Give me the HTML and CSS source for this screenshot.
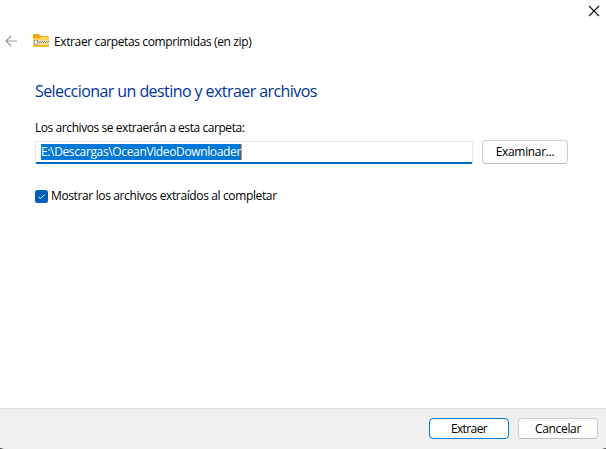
FILE: index.html
```
<!DOCTYPE html>
<html lang="es">
<head>
<meta charset="utf-8">
<title>Extraer carpetas comprimidas (en zip)</title>
<link rel="stylesheet" href="styles.css">
</head>
<body>
<div class="dialog">
  <div class="titlebar">
    <svg class="close" width="12" height="12" viewBox="0 0 12 12"><path d="M1 1l10 10M11 1L1 11"/></svg>
  </div>
  <header class="header">
    <svg class="back" width="12" height="12" viewBox="0 0 12 12"><path d="M12 6H1M6 1L1 6l5 5"/></svg>
    <svg class="zip" width="16" height="14" viewBox="0 0 16 14">
      <path fill="#eeaa14" d="M0 1.2Q0 0 1.2 0H6l2 2h6.8Q16 2 16 3v4H0z"/>
      <path fill="#ffd75e" d="M0 4.5h6L7.5 3H16v9q0 1-1 1H1q-1 0-1-1z"/>
      <path fill="#f3bb35" d="M0 11h16v1q0 1-1 1H1q-1 0-1-1z"/>
      <path fill="#e6e0cc" d="M4 6.5h12v3H4z"/>
      <path stroke="#968c70" stroke-dasharray="1 1" d="M5 7.5h11M6 8.5h10"/>
      <path fill="#a3a8ab" d="M1 6h4v5H1z"/>
      <path fill="#f2f3f4" d="M2 7h2v3H2z"/>
    </svg>
    <span class="title">Extraer carpetas comprimidas (en zip)</span>
  </header>
  <main class="content">
    <h1 class="heading">Seleccionar un destino y extraer archivos</h1>
    <div class="label">Los archivos se extraerán a esta carpeta:</div>
    <div class="row">
      <div class="field"><span class="selection">E:\Descargas\OceanVideoDownloader</span></div>
      <button class="button browse"><span>Examinar...</span></button>
    </div>
    <div class="check">
      <svg class="box" width="13" height="13" viewBox="0 0 13 13"><rect width="13" height="13" rx="2.5"/><path d="M3.5 6.7l2 2 4-4"/></svg>
      <span class="check-label">Mostrar los archivos extraídos al completar</span>
    </div>
  </main>
  <footer class="footer">
    <button class="button primary"><span>Extraer</span></button>
    <button class="button"><span>Cancelar</span></button>
  </footer>
</div>
</body>
</html>
```
FILE: styles.css
```
* { box-sizing: border-box; }
body {
  margin: 0;
  background: #fff;
  color: #000;
  font: 12px/16px "Open Sans", "Noto Sans", sans-serif;
}
.dialog { display: flex; flex-direction: column; height: 449px; overflow: hidden; white-space: nowrap; }
.titlebar { display: flex; justify-content: flex-end; height: 33px; padding: 5px 6px 0 0; }
.close { fill: none; stroke: #111; stroke-width: 1.1; }
.header { display: flex; align-items: center; height: 16px; padding-left: 5px; }
.back { fill: none; stroke: #999; stroke-width: 1.2; }
.zip { margin: 0 5px 0 16px; }
.title { padding-top: 2px; letter-spacing: -0.38px; }
.content { flex: 1; padding: 31px 38px 0 35px; }
.heading { margin: 0; font-size: 16px; font-weight: 400; line-height: 22px; letter-spacing: -0.57px; color: #003399; }
.label { margin-top: 18px; letter-spacing: -0.43px; }
.row { display: flex; align-items: center; gap: 9px; margin-top: 4px; }
.field {
  width: 438px;
  height: 23px;
  padding: 2px 5px;
  border: 1px solid #e5e9ed;
  border-bottom: 2px solid #0067c0;
  border-radius: 2px;
  line-height: 15px;
}
.selection { display: inline-block; height: 16px; background: #0078d7; color: #fff; letter-spacing: -0.36px; border-right: 1px solid #ff8728; }
.check { display: flex; align-items: center; gap: 3px; margin-top: 24px; }
.box rect { fill: #005fb8; }
.box path { fill: none; stroke: #fff; }
.check-label { letter-spacing: -0.37px; }
.button {
  width: 80px;
  height: 21px;
  padding: 0;
  border: 1px solid #d0d0d0;
  border-bottom-color: #bcbcbc;
  border-radius: 4px;
  background: #fdfdfd;
  color: #000;
  font: inherit;
  line-height: 18px;
  letter-spacing: -0.33px;
}
.browse { width: 86px; height: 24px; }
.primary { border-color: #0078d4; letter-spacing: -0.6px; }
.footer {
  display: flex;
  justify-content: flex-end;
  gap: 9px;
  height: 41px;
  padding: 9px 8px 0 0;
  border-top: 1px solid #dfdfdf;
  background:
    linear-gradient(90deg, #333, #f0f0f0) left bottom / 4px 1px no-repeat,
    linear-gradient(270deg, #333, #f0f0f0) right bottom / 4px 1px no-repeat,
    #f0f0f0;
}
```
